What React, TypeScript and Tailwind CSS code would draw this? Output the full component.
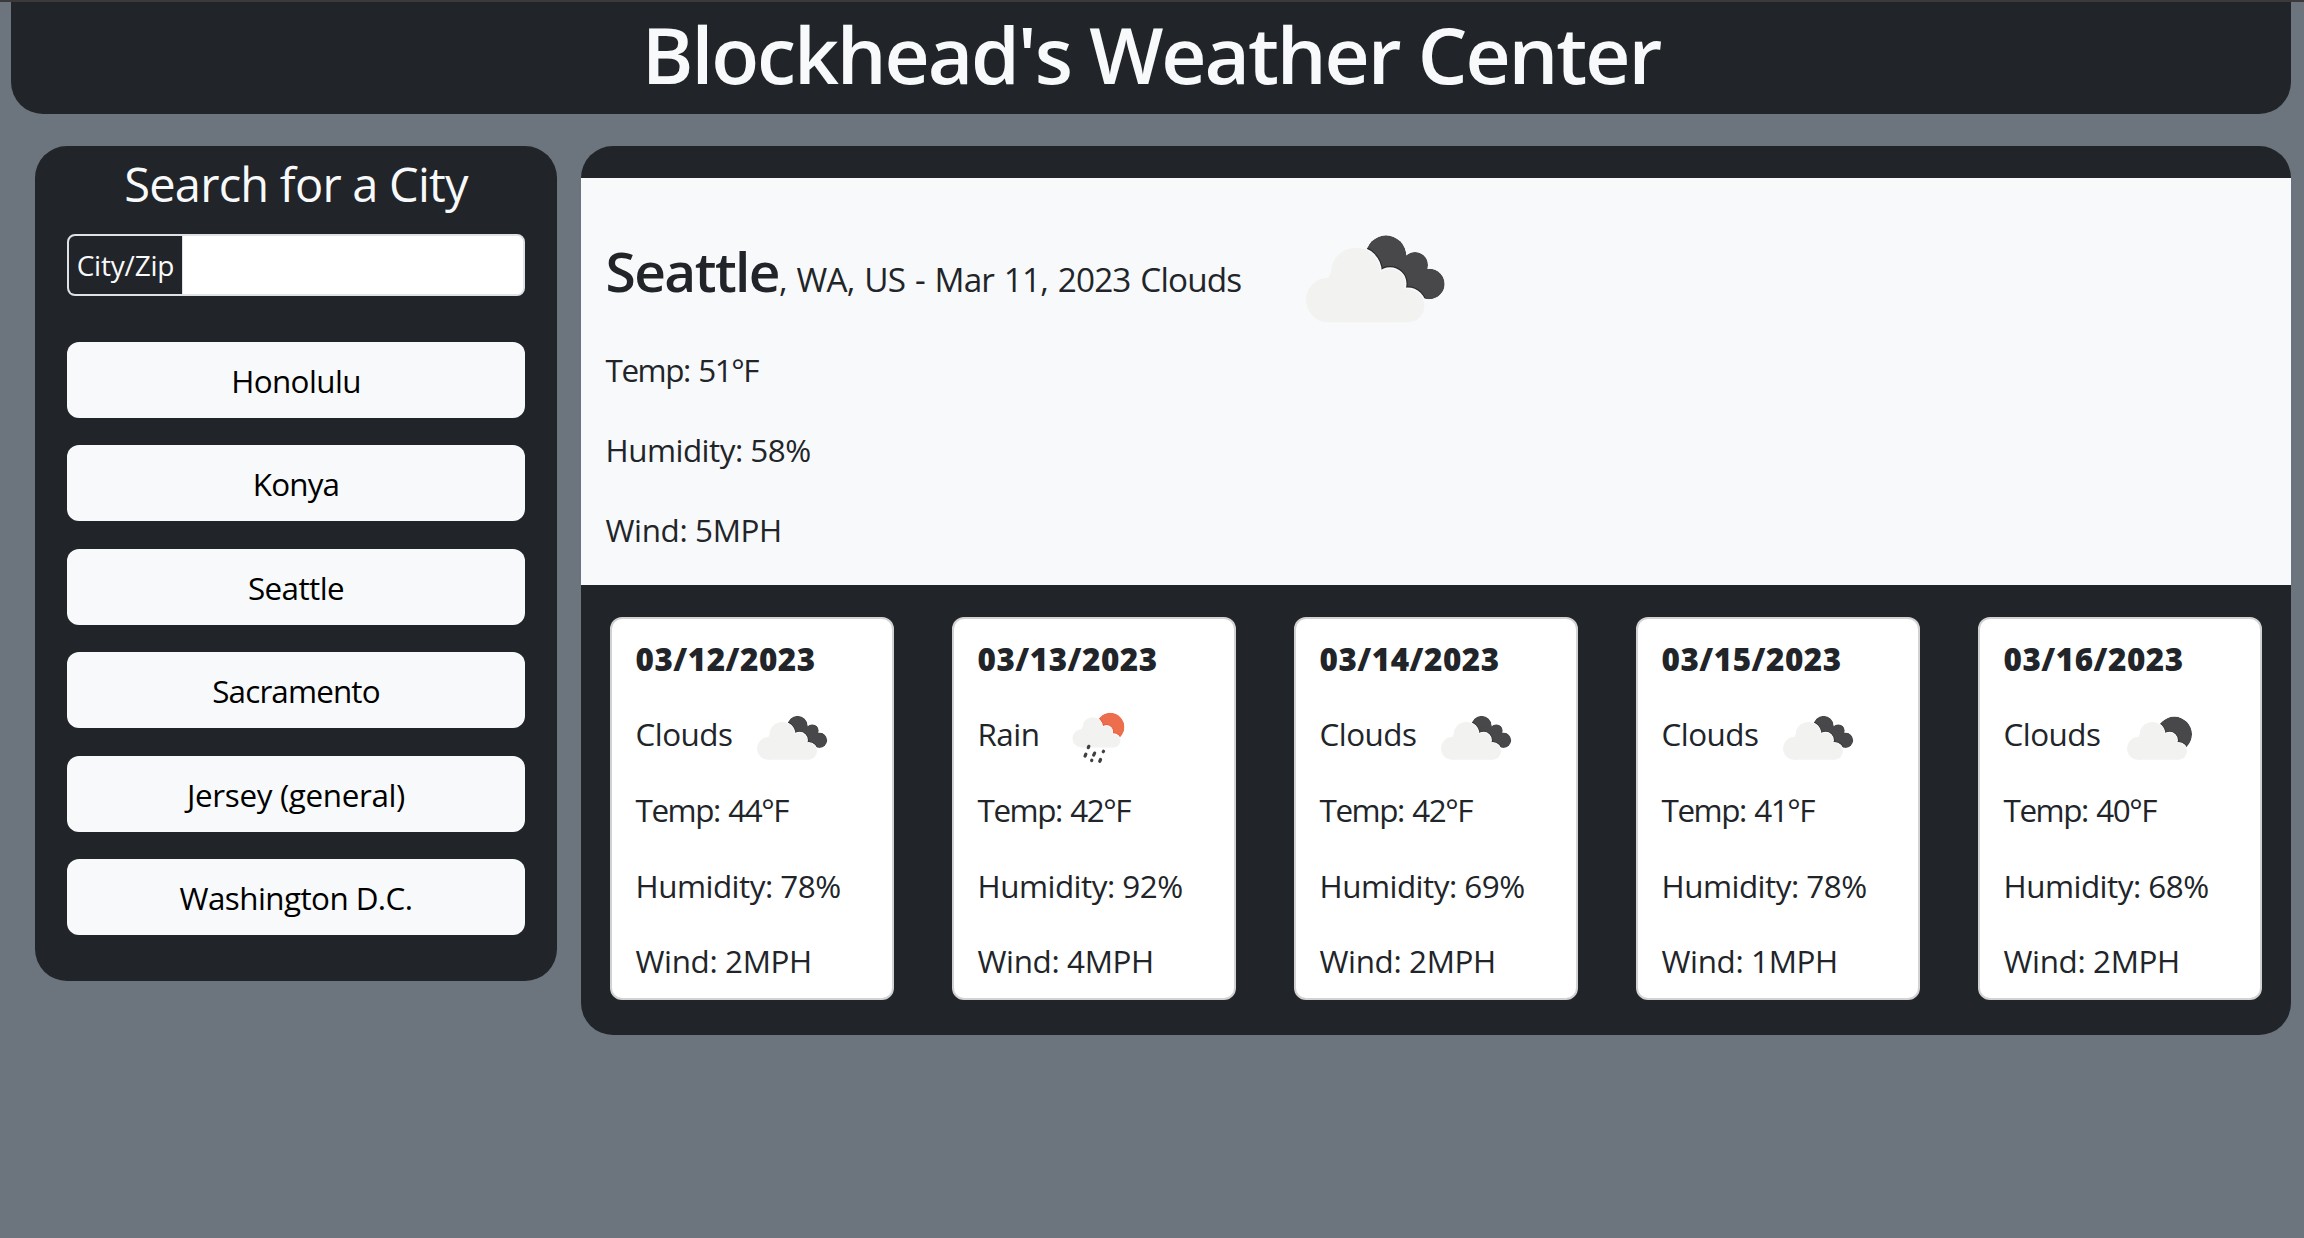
import { useId } from "react";

type IconKind = "broken" | "scattered" | "rain";

function Cloud() {
  return (
    <>
      <circle cx="745" cy="300" r="67" />
      <circle cx="827" cy="217" r="74" />
      <circle cx="930" cy="251" r="45" />
      <circle cx="983" cy="317" r="50" />
      <path d="M745 233 L753 217 L930 217 L983 300 L983 367 L745 367 Z" />
    </>
  );
}

function Behind({ kind }: { kind: IconKind }) {
  if (kind === "broken") {
    return (
      <>
        <circle cx="918" cy="167" r="61" />
        <circle cx="1005" cy="195" r="39" />
        <circle cx="1048" cy="252" r="46" />
        <path d="M918 167 L1005 195 L1048 252 L1010 300 L900 260 Z" />
      </>
    );
  }
  return <circle cx="958" cy="216" r="105" />;
}

function WeatherIcon({ kind, className }: { kind: IconKind; className: string }) {
  const id = useId();
  const rain = kind === "rain";
  return (
    <svg viewBox={rain ? "660 90 440 400" : "660 90 450 294"} className={className} aria-hidden="true">
      <mask id={id} maskUnits="userSpaceOnUse" x="640" y="60" width="500" height="460">
        <g fill="white">
          <Behind kind={kind} />
        </g>
        <g fill="black" stroke="black" strokeWidth="9">
          <Cloud />
        </g>
      </mask>
      <g mask={`url(#${id})`}>
        <g fill={rain ? "#ec6e4c" : "#48484a"}>
          <Behind kind={kind} />
        </g>
        <g fill="none" stroke={rain ? "#e8482a" : "#2a2a2b"} strokeWidth="16">
          <Cloud />
        </g>
      </g>
      <g fill="#f2f2f1">
        <Cloud />
      </g>
      {rain && (
        <path
          d="M799 359 L795 369 M777 417 L771 431 M842 409 L835 424 M821 462 L820 464 M908 396 L906 399 M886 457 L880 470"
          stroke="#404042"
          strokeWidth="24"
          strokeLinecap="round"
        />
      )}
    </svg>
  );
}

const cities = [
  { name: "Honolulu", tracking: "tracking-[-0.6px]" },
  { name: "Konya", tracking: "tracking-[-0.8px]" },
  { name: "Seattle", tracking: "tracking-[-0.6px]" },
  { name: "Sacramento", tracking: "tracking-[-0.85px]" },
  { name: "Jersey (general)", tracking: "tracking-[-0.35px]" },
  { name: "Washington D.C.", tracking: "tracking-[-0.57px]" },
];

const forecast: {
  date: string;
  sky: string;
  icon: IconKind;
  label: string;
  temp: number;
  humidity: number;
  wind: number;
}[] = [
  { date: "03/12/2023", sky: "Clouds", icon: "broken", label: "w-[118.5px]", temp: 44, humidity: 78, wind: 2 },
  { date: "03/13/2023", sky: "Rain", icon: "rain", label: "w-[92px]", temp: 42, humidity: 92, wind: 4 },
  { date: "03/14/2023", sky: "Clouds", icon: "broken", label: "w-[118.5px]", temp: 42, humidity: 69, wind: 2 },
  { date: "03/15/2023", sky: "Clouds", icon: "broken", label: "w-[118.5px]", temp: 41, humidity: 78, wind: 1 },
  { date: "03/16/2023", sky: "Clouds", icon: "scattered", label: "w-[120.5px]", temp: 40, humidity: 68, wind: 2 },
];

function Reading({ temp, humidity, wind, row }: { temp: number; humidity: number; wind: number; row: string }) {
  return (
    <>
      <p className={`${row} tracking-[-1.4px] [word-spacing:1.5px]`}>Temp: {temp}°F</p>
      <p className={`${row} tracking-[-0.5px]`}>Humidity: {humidity}%</p>
      <p className={`${row} tracking-[-0.36px]`}>Wind: {wind}MPH</p>
    </>
  );
}

export default function App() {
  return (
    <div className="min-h-[1238px] border-t-2 border-[#3a3a3a] bg-[#6c757d] pr-[13px] pl-[11px] font-['Open_Sans','Noto_Sans',sans-serif] text-[31.4px] text-[#212529]">
      <header className="h-28 rounded-b-[32px] bg-[#212529] text-center">
        <h1 className="text-[78.5px] leading-[103px] font-semibold tracking-[-2.1px] text-[#f8f9fa]">
          Blockhead's Weather Center
        </h1>
      </header>

      <main className="mt-8 flex items-start gap-6 pl-6">
        <aside className="h-[835px] w-[522px] shrink-0 rounded-[32px] bg-[#212529] px-8 pt-[9px]">
          <h2 className="text-center text-[47px] leading-[58px] tracking-[-0.77px] text-[#f8f9fa]">
            Search for a City
          </h2>
          <div className="mt-[21px] flex h-[62px] overflow-hidden rounded-lg border-2 border-[#dee2e6] bg-white">
            <label
              htmlFor="city"
              className="flex w-[114px] shrink-0 items-center justify-center border-r border-[#dee2e6] bg-[#212529] text-[28px] tracking-[-0.2px] text-[#f8f9fa]"
            >
              City/Zip
            </label>
            <input id="city" className="min-w-0 flex-1 bg-white px-3 outline-none" />
          </div>
          <div className="mt-[46px] flex flex-col gap-[27.4px]">
            {cities.map((c) => (
              <button
                key={c.name}
                className={`h-[76px] rounded-xl bg-[#f8f9fa] pt-0.5 leading-[74px] text-black ${c.tracking}`}
              >
                {c.name}
              </button>
            ))}
          </div>
        </aside>

        <section className="h-[889px] min-w-0 flex-1 rounded-[32px] bg-[#212529] pt-8">
          <div className="h-[407px] bg-[#f8f9fa] pl-[24.5px]">
            <div className="flex h-[152px] pt-[52px]">
              <h3 className="flex w-[694.5px] items-baseline pt-px leading-20 whitespace-nowrap">
                <span className="text-[55px] font-semibold tracking-[-1.55px]">Seattle</span>
                <span className="text-[33.3px] tracking-[-0.85px] whitespace-pre [word-spacing:2px]">
                  , WA, US - Mar 11, 2023 Clouds
                </span>
              </h3>
              <WeatherIcon kind="broken" className="h-[98px] w-[150px]" />
            </div>
            <Reading temp={51} humidity={58} wind={5} row="h-20 leading-20" />
          </div>

          <div className="mt-8 flex justify-between px-[29px]">
            {forecast.map((d) => (
              <article
                key={d.date}
                className="h-[383px] w-[284px] rounded-xl border-2 border-[#d2d2d3] bg-white pt-[1.6px] pl-[23.5px]"
              >
                <p className="h-[75.7px] leading-[75.7px] font-extrabold tracking-[0.53px]">{d.date}</p>
                <div className="flex h-[75.7px] items-center leading-[75.7px]">
                  <span className={`${d.label} tracking-[-0.5px]`}>{d.sky}</span>
                  <WeatherIcon
                    kind={d.icon}
                    className={d.icon === "rain" ? "mt-[5px] h-[54px] w-[59.5px]" : "mt-2 h-[49.6px] w-[76px]"}
                  />
                </div>
                <Reading temp={d.temp} humidity={d.humidity} wind={d.wind} row="h-[75.7px] leading-[75.7px]" />
              </article>
            ))}
          </div>
        </section>
      </main>
    </div>
  );
}
